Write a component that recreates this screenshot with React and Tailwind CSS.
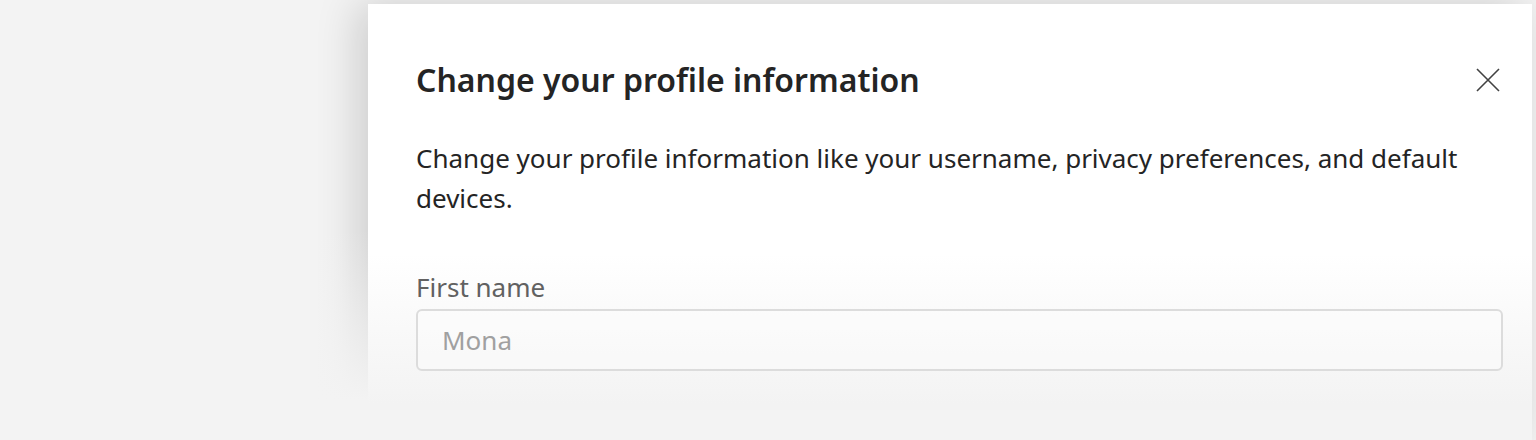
import React from 'react';

// Profile settings drawer
const CloseIcon = () => (
    <svg width="24" height="24" viewBox="0 0 24 24" fill="none">
        <path d="M1 1L23 23M23 1L1 23" stroke="#424242" strokeWidth="1.6" />
    </svg>
);

const App = () => {
    return (
        <div
            className="relative h-[440px] overflow-hidden bg-[#f3f3f3] pt-1"
            style={{ fontFamily: '"Segoe UI", "Noto Sans", "Open Sans", sans-serif' }}
        >
            <div className="ml-[368px] mr-1 h-[436px] bg-[linear-gradient(to_bottom,#ffffff_250px,#f3f3f3_400px)] pl-12 pr-[29px] shadow-[-10px_0_40px_rgba(0,0,0,0.16)]">
                <div className="flex items-center justify-between pt-[57px]">
                    <h1 className="text-[32px] font-semibold leading-[38px] text-[#242424]">
                        Change your profile information
                    </h1>
                    <button className="mr-[3px]">
                        <CloseIcon />
                    </button>
                </div>
                <p className="mt-[39px] pr-10 text-[26px] leading-[40px] text-[#242424]">
                    Change your profile information like your username, privacy preferences, and default devices.
                </p>
                <label className="mt-[53px] block text-[26px] leading-[32px] text-[#616161]">First name</label>
                <div className="mt-[6px] flex h-[62px] items-center rounded-md border-2 border-[#dcdcdc] bg-white/30 px-6 text-[26px] text-[#a0a0a0]">
                    Mona
                </div>
            </div>
            {/* fade the drawer shadow out toward the bottom */}
            <div className="absolute bottom-0 left-0 top-[230px] w-[368px] bg-[linear-gradient(to_bottom,rgba(243,243,243,0),#f3f3f3_170px)]" />
        </div>
    );
};

export default App;
